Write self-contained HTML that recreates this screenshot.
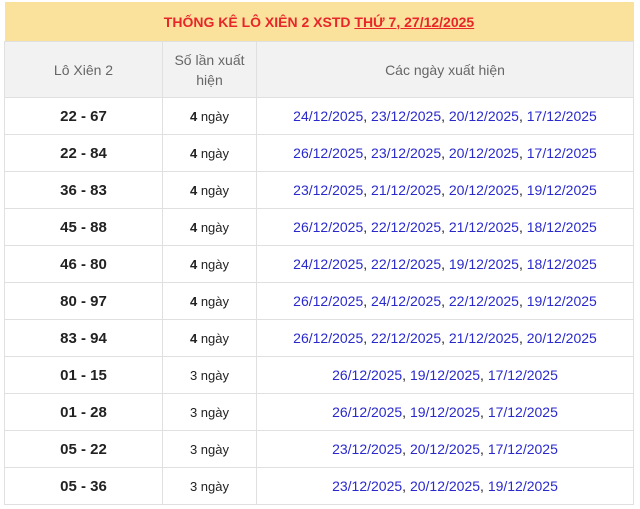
<!DOCTYPE html>
<html><head><meta charset="utf-8"><style>
body{margin:0;background:#fff;font-family:"Liberation Sans",Arial,sans-serif;}
table{position:absolute;left:4px;top:2px;width:630px;border-collapse:collapse;table-layout:fixed;}
td,th{border:1px solid #e0e0e0;text-align:center;padding:0;font-size:14px;}
.t{background:#fbe29c;height:39px;color:#e8262a;font-weight:bold;font-size:14px;border:none;}
.t u{text-decoration:underline;}
.h th{background:#f2f2f2;color:#666;font-weight:normal;height:55px;line-height:20px;}
tr.r td{height:36px;color:#222;}
td.k{font-weight:bold;font-size:15px;}
td.n{font-size:13px;}
td.d{color:#222;}
.d span{color:#2a2acc;}
</style></head><body>
<table>
<colgroup><col style="width:158px"><col style="width:94px"><col></colgroup>
<tr><td class="t" colspan="3">THỐNG KÊ LÔ XIÊN 2 XSTD <u>THỨ 7, 27/12/2025</u></td></tr>
<tr class="h"><th>Lô Xiên 2</th><th>Số lần xuất<br>hiện</th><th>Các ngày xuất hiện</th></tr>
<tr class="r"><td class="k">22 - 67</td><td class="n"><b>4</b> ngày</td><td class="d"><span>24/12/2025</span>, <span>23/12/2025</span>, <span>20/12/2025</span>, <span>17/12/2025</span></td></tr>
<tr class="r"><td class="k">22 - 84</td><td class="n"><b>4</b> ngày</td><td class="d"><span>26/12/2025</span>, <span>23/12/2025</span>, <span>20/12/2025</span>, <span>17/12/2025</span></td></tr>
<tr class="r"><td class="k">36 - 83</td><td class="n"><b>4</b> ngày</td><td class="d"><span>23/12/2025</span>, <span>21/12/2025</span>, <span>20/12/2025</span>, <span>19/12/2025</span></td></tr>
<tr class="r"><td class="k">45 - 88</td><td class="n"><b>4</b> ngày</td><td class="d"><span>26/12/2025</span>, <span>22/12/2025</span>, <span>21/12/2025</span>, <span>18/12/2025</span></td></tr>
<tr class="r"><td class="k">46 - 80</td><td class="n"><b>4</b> ngày</td><td class="d"><span>24/12/2025</span>, <span>22/12/2025</span>, <span>19/12/2025</span>, <span>18/12/2025</span></td></tr>
<tr class="r"><td class="k">80 - 97</td><td class="n"><b>4</b> ngày</td><td class="d"><span>26/12/2025</span>, <span>24/12/2025</span>, <span>22/12/2025</span>, <span>19/12/2025</span></td></tr>
<tr class="r"><td class="k">83 - 94</td><td class="n"><b>4</b> ngày</td><td class="d"><span>26/12/2025</span>, <span>22/12/2025</span>, <span>21/12/2025</span>, <span>20/12/2025</span></td></tr>
<tr class="r"><td class="k">01 - 15</td><td class="n">3 ngày</td><td class="d"><span>26/12/2025</span>, <span>19/12/2025</span>, <span>17/12/2025</span></td></tr>
<tr class="r"><td class="k">01 - 28</td><td class="n">3 ngày</td><td class="d"><span>26/12/2025</span>, <span>19/12/2025</span>, <span>17/12/2025</span></td></tr>
<tr class="r"><td class="k">05 - 22</td><td class="n">3 ngày</td><td class="d"><span>23/12/2025</span>, <span>20/12/2025</span>, <span>17/12/2025</span></td></tr>
<tr class="r"><td class="k">05 - 36</td><td class="n">3 ngày</td><td class="d"><span>23/12/2025</span>, <span>20/12/2025</span>, <span>19/12/2025</span></td></tr>
</table>
</body></html>
